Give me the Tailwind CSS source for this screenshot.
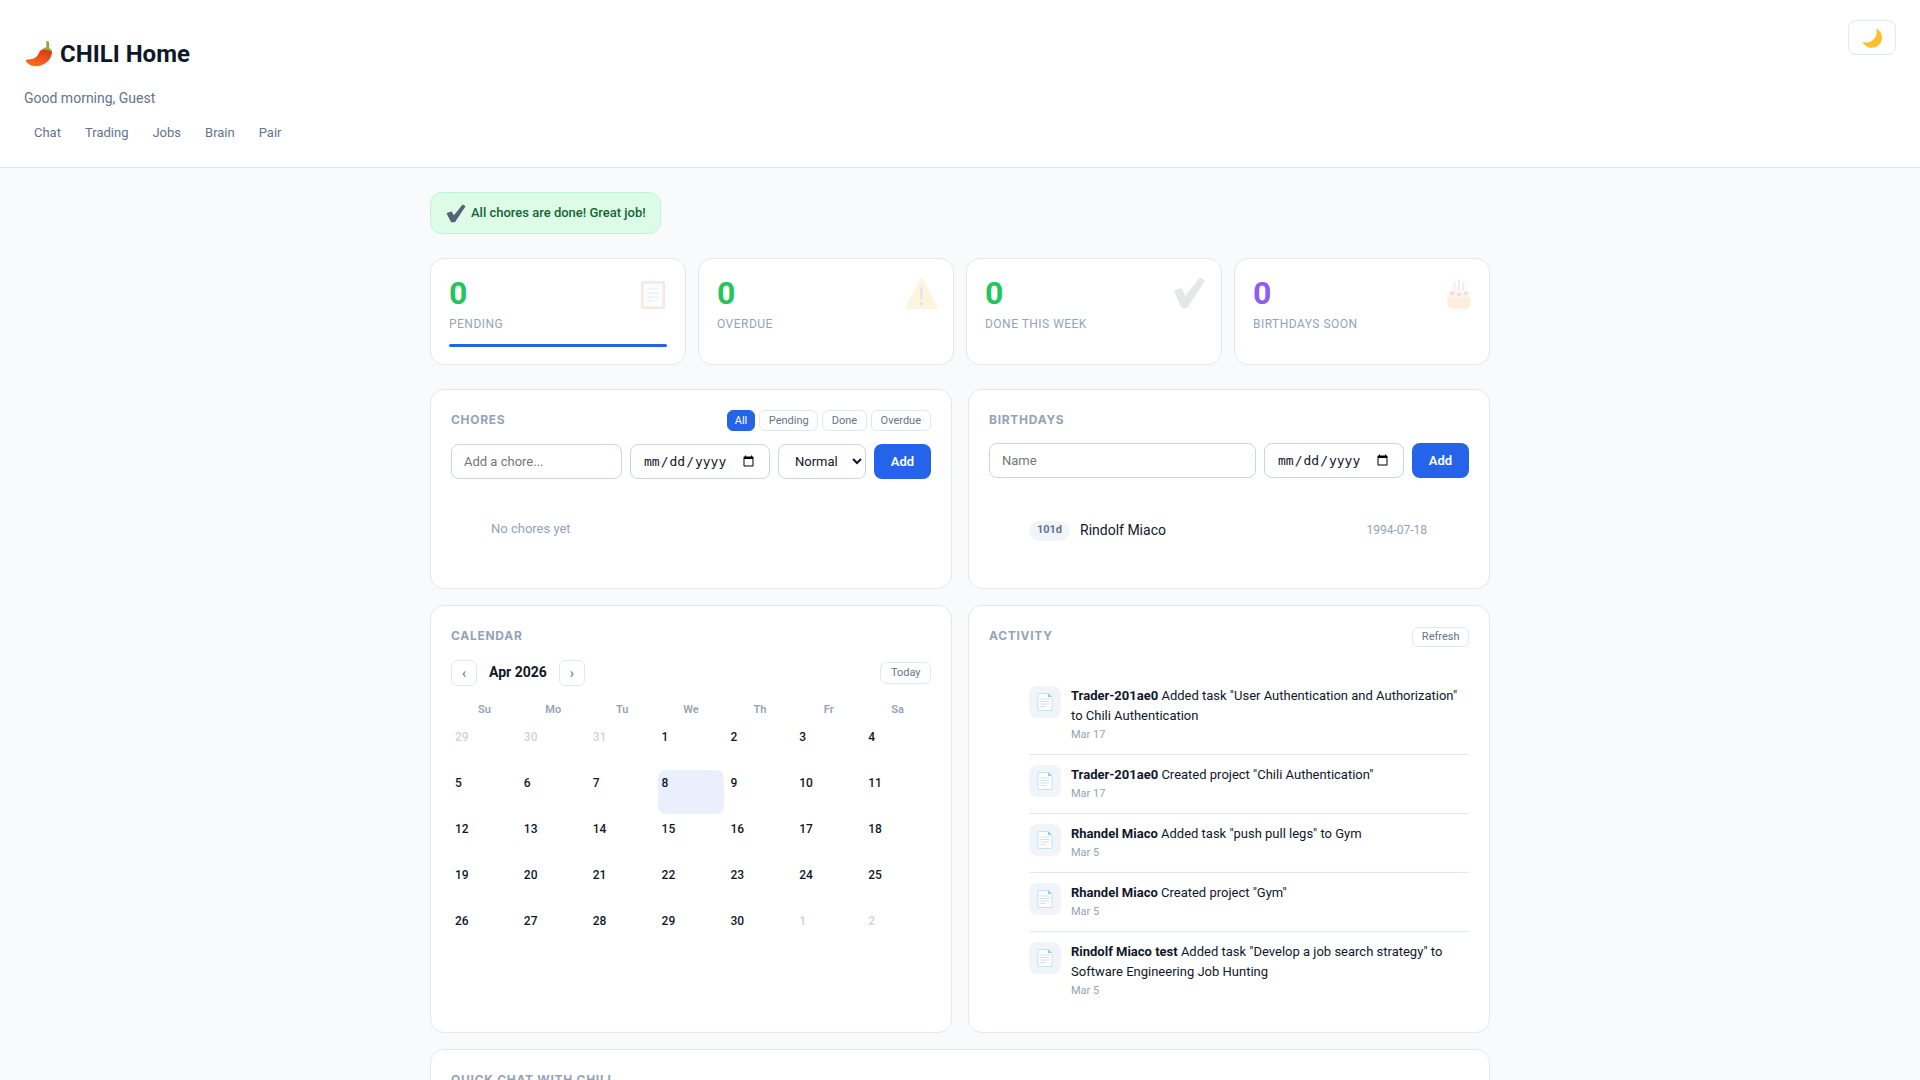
<!DOCTYPE html>
<html lang="en">
<head>
    <meta charset="UTF-8">
    <meta name="viewport" content="width=device-width, initial-scale=1.0">
    <title>CHILI Home</title>
    <script src="https://cdn.jsdelivr.net/npm/@tailwindcss/browser@4"></script>
</head>
<body class="h-screen overflow-hidden bg-[#f8fafc] font-[Roboto,sans-serif] text-[#0f172a]">
    <!-- Header -->
    <header class="flex h-[168px] items-start justify-between border-b border-[#e2e8f0] bg-white pt-[20px] pr-[24px] pl-[24px]">
        <div>
            <h1 class="mt-[18px] flex h-[32px] items-center gap-[7px] text-[24px] leading-[32px] font-bold">
                <svg class="ml-[1px] h-[28px] w-[28px]" viewBox="0 0 28 28">
                    <defs><linearGradient id="chili" x1="0.4" y1="1" x2="0.7" y2="0"><stop offset="0" stop-color="#ff6d1f"/><stop offset="1" stop-color="#dc3412"/></linearGradient></defs>
                    <path d="M21 8C21.500 5.500 21.500 3.500 21 1.500L23.500 1C24.500 3.500 24.500 6 24 8.500Z" fill="#7cb342"/>
                    <path d="M17 9.500C14.500 10.500 14 13 12.500 15.500C10.500 18.500 6 19.500 2.500 19.500C1 19.500 .5 20.500 1.500 22C4 25.500 9 27 14 26C21 24.500 27 18.500 27 12C27 10 24 8.800 21 8.800C19.500 8.800 18 9 17 9.500Z" fill="url(#chili)"/>
                    <path d="M17 10C18.500 7.500 21 6.800 23.500 7.500C25.500 8.200 26.800 10 26.800 12C24.500 10 20 9.500 17 10Z" fill="#8bb23f"/>
                </svg>
                <span>CHILI Home</span>
            </h1>
            <p class="mt-[17px] text-[14px] leading-[22px] text-[#64748b]">Good morning, Guest</p>
            <nav class="mt-[8px] flex gap-[4px] text-[13px] text-[#64748b]">
                <a class="px-[10px] py-[6px] leading-[20px]" href="#">Chat</a>
                <a class="px-[10px] py-[6px] leading-[20px]" href="#">Trading</a>
                <a class="px-[10px] py-[6px] leading-[20px]" href="#">Jobs</a>
                <a class="px-[10px] py-[6px] leading-[20px]" href="#">Brain</a>
                <a class="px-[10px] py-[6px] leading-[20px]" href="#">Pair</a>
            </nav>
        </div>
        <button class="flex h-[35px] w-[48px] items-center justify-center rounded-[8px] border border-[#e2e8f0] bg-white">
            <svg class="h-[22px] w-[22px]" viewBox="0 0 22 22"><path d="M15 1.500C19 3.500 21.500 7.500 21 11.500C20.500 16.500 16 20.800 11 20.800C7 20.800 3.500 18.500 1.500 15C5 16 9 15.500 12 13C15.500 10 16.500 5.500 15 1.500Z" fill="#fbc02d"/></svg>
        </button>
    </header>

    <main class="mx-auto w-[1060px] pt-[24px]">
        <!-- Banner -->
        <div class="flex h-[42px] w-[231px] items-center gap-[5px] rounded-[12px] border border-[#bbf7d0] bg-[#dcfce7] pl-[14px] text-[13px] font-medium text-[#166534]">
            <svg class="h-[21px] w-[21px] shrink-0" viewBox="0 0 32 32"><path d="M3.500 16L9.500 14L13.500 20.500L27 3.500L30 5L14.500 28.500L10 28.500Z" fill="#566275" stroke="#566275" stroke-width="2" stroke-linejoin="round"/></svg>
            <span>All chores are done! Great job!</span>
        </div>

        <!-- Stats -->
        <div class="mt-[24px] grid grid-cols-4 gap-[12px]">
            <div class="relative h-[107px] rounded-[14px] border border-[#e2e8f0] bg-white px-[18px] pt-[16px]">
                <div class="text-[32px] leading-[36px] font-bold text-[#22c55e]">0</div>
                <div class="mt-[3px] text-[12px] leading-[20px] tracking-[0.04em] text-[#94a3b8] uppercase">Pending</div>
                <div class="mt-[10px] h-[3px] rounded-full bg-[#2563eb]"></div>
                <svg class="absolute top-[19px] right-[16px] h-[32px] w-[32px] opacity-15" viewBox="0 0 32 32"><rect x="4" y="3" width="24" height="28" rx="2" fill="#c56a2c"/><rect x="6.500" y="5.500" width="19" height="23" fill="#eef2f4"/><path d="M10 11h12M10 15h12M10 19h12M10 23h8" stroke="#9aa4ad" stroke-width="1.500"/><path d="M10 6V3h4l2-2 2 2h4v3z" fill="#7f9fb3"/></svg>
            </div>
            <div class="relative h-[107px] rounded-[14px] border border-[#e2e8f0] bg-white px-[18px] pt-[16px]">
                <div class="text-[32px] leading-[36px] font-bold text-[#22c55e]">0</div>
                <div class="mt-[3px] text-[12px] leading-[20px] tracking-[0.04em] text-[#94a3b8] uppercase">Overdue</div>
                <svg class="absolute top-[18px] right-[15px] h-[33px] w-[33px] opacity-15" viewBox="0 0 32 32"><path d="M16 1.500c.8 0 1.300.5 1.700 1.200l13.800 26c.6 1.200-.1 2.300-1.400 2.300H1.900C.6 31-.1 29.900.5 28.700l13.800-26c.4-.7.900-1.200 1.700-1.200z" fill="#fbc02d"/><path d="M14.500 10h3l-.5 12h-2zM14.500 24.500h3v3h-3z" fill="#4b5563"/></svg>
            </div>
            <div class="relative h-[107px] rounded-[14px] border border-[#e2e8f0] bg-white px-[18px] pt-[16px]">
                <div class="text-[32px] leading-[36px] font-bold text-[#22c55e]">0</div>
                <div class="mt-[3px] text-[12px] leading-[20px] tracking-[0.04em] text-[#94a3b8] uppercase">Done this week</div>
                <svg class="absolute top-[18px] right-[16px] h-[32px] w-[32px] opacity-15" viewBox="0 0 32 32"><path d="M2 14L8 12L12.500 20L27 1.500L31 4L13.500 30.500L9 30.500Z" fill="#566275" stroke="#566275" stroke-width="1.500" stroke-linejoin="round"/></svg>
            </div>
            <div class="relative h-[107px] rounded-[14px] border border-[#e2e8f0] bg-white px-[18px] pt-[16px]">
                <div class="text-[32px] leading-[36px] font-bold text-[#8b5cf6]">0</div>
                <div class="mt-[3px] text-[12px] leading-[20px] tracking-[0.04em] text-[#94a3b8] uppercase">Birthdays soon</div>
                <svg class="absolute top-[20px] right-[16px] h-[31px] w-[28px] opacity-20" viewBox="0 0 28 32"><rect x="2" y="11" width="24" height="20" rx="6" fill="#f9b568"/><path d="M2 17c0-4 4-7 12-7s12 3 12 7c0 2-2 3-3 1-1 2-4 2-5 0-1 2-3 2-4 0-1 2-4 2-5 0-1 2-3 2-4 0-1 2-3 1-3-1z" fill="#f8d7c4"/><circle cx="7" cy="15" r="2" fill="#e53935"/><circle cx="14" cy="16" r="2" fill="#e53935"/><circle cx="21" cy="15" r="2" fill="#e53935"/><path d="M9.500 3v8M18.500 3v8" stroke="#f9a825" stroke-width="2"/><path d="M14 1v10" stroke="#64b5f6" stroke-width="2"/></svg>
            </div>
        </div>

        <!-- Chores / Birthdays -->
        <div class="mt-[24px] grid grid-cols-2 gap-[16px]">
            <section class="h-[200px] rounded-[14px] border border-[#e2e8f0] bg-white p-[20px]">
                <div class="flex h-[21px] items-center justify-between">
                    <h2 class="-mt-[1px] text-[12px] font-bold tracking-[0.06em] text-[#94a3b8] uppercase font-[Inter,sans-serif]">Chores</h2>
                    <div class="flex gap-[4px] text-[11px]">
                        <button class="h-[21px] rounded-[6px] border border-[#2563eb] bg-[#2563eb] px-[7px] pt-[1px] text-white">All</button>
                        <button class="h-[21px] rounded-[6px] border border-[#e2e8f0] bg-white px-[8.500px] pt-[1px] text-[#64748b]">Pending</button>
                        <button class="h-[21px] rounded-[6px] border border-[#e2e8f0] bg-white px-[8.500px] pt-[1px] text-[#64748b]">Done</button>
                        <button class="h-[21px] rounded-[6px] border border-[#e2e8f0] bg-white px-[9px] pt-[1px] text-[#64748b]">Overdue</button>
                    </div>
                </div>
                <div class="mt-[13px] flex gap-[8px]">
                    <input class="h-[35px] min-w-0 flex-1 rounded-[8px] border border-[#cbd5e1] px-[12px] text-[13px] placeholder:text-[#757575]" placeholder="Add a chore...">
                    <input type="date" class="h-[35px] w-[140px] rounded-[8px] border border-[#cbd5e1] px-[12px] text-[13px] font-['DejaVu_Sans_Mono',monospace]">
                    <select class="h-[35px] w-[88px] appearance-auto rounded-[8px] border border-[#cbd5e1] bg-white px-[12px] text-[13px]"><option>Normal</option></select>
                    <button class="h-[35px] w-[57px] rounded-[8px] bg-[#2563eb] text-[13px] font-semibold text-white">Add</button>
                </div>
                <ul class="mt-[16px] pl-[40px]">
                    <li class="pt-[24px] text-[13px] leading-[20px] text-[#94a3b8]">No chores yet</li>
                </ul>
            </section>
            <section class="h-[200px] rounded-[14px] border border-[#e2e8f0] bg-white p-[20px]">
                <h2 class="h-[20px] text-[12px] leading-[20px] font-bold tracking-[0.06em] text-[#94a3b8] uppercase font-[Inter,sans-serif]">Birthdays</h2>
                <div class="mt-[13px] flex gap-[8px]">
                    <input class="h-[35px] min-w-0 flex-1 rounded-[8px] border border-[#cbd5e1] px-[12px] text-[13px] placeholder:text-[#757575]" placeholder="Name">
                    <input type="date" class="h-[35px] w-[140px] rounded-[8px] border border-[#cbd5e1] px-[12px] text-[13px] font-['DejaVu_Sans_Mono',monospace]">
                    <button class="h-[35px] w-[57px] rounded-[8px] bg-[#2563eb] text-[13px] font-semibold text-white">Add</button>
                </div>
                <ul class="mt-[16px] pl-[40px]">
                    <li class="flex items-center gap-[10px] pt-[26px] pr-[42px]">
                        <span class="flex h-[20px] w-[41px] items-center justify-center rounded-full bg-[#f1f5f9] text-[11px] font-bold text-[#64748b]">101d</span>
                        <span class="flex-1 text-[14px]">Rindolf Miaco</span>
                        <span class="-mt-[1px] text-[12px] text-[#94a3b8]">1994-07-18</span>
                    </li>
                </ul>
            </section>
        </div>

        <!-- Calendar / Activity -->
        <div class="mt-[16px] grid grid-cols-2 gap-[16px]">
            <section class="h-[428px] rounded-[14px] border border-[#e2e8f0] bg-white p-[20px]">
                <h2 class="h-[20px] text-[12px] leading-[20px] font-bold tracking-[0.06em] text-[#94a3b8] uppercase font-[Inter,sans-serif]">Calendar</h2>
                <div class="mt-[14px] flex h-[26px] items-center gap-[12px]">
                    <button class="flex h-[26px] w-[26px] items-center justify-center rounded-[6px] border border-[#e2e8f0] text-[14px] text-[#64748b]">‹</button>
                    <span class="-mt-[2px] text-[14px] font-bold">Apr 2026</span>
                    <button class="flex h-[26px] w-[26px] items-center justify-center rounded-[6px] border border-[#e2e8f0] text-[14px] text-[#64748b]">›</button>
                    <button class="ml-auto h-[22px] rounded-[6px] border border-[#e2e8f0] px-[9.500px] text-[11px] text-[#64748b]">Today</button>
                </div>
                <div class="mt-[15px] grid grid-cols-7 gap-x-[2px] text-center text-[11px] leading-[18px] font-semibold text-[#94a3b8]">
                    <div>Su</div><div>Mo</div><div>Tu</div><div>We</div><div>Th</div><div>Fr</div><div>Sa</div>
                </div>
                <div class="mt-[5px] grid grid-cols-7 gap-[2px] text-[12px] leading-[18px] font-medium">
                    <div class="h-[44px] p-[4px_4px] text-[#cbd5e1]">29</div><div class="h-[44px] p-[4px_4px] text-[#cbd5e1]">30</div><div class="h-[44px] p-[4px_4px] text-[#cbd5e1]">31</div><div class="h-[44px] p-[4px_4px]">1</div><div class="h-[44px] p-[4px_4px]">2</div><div class="h-[44px] p-[4px_4px]">3</div><div class="h-[44px] p-[4px_4px]">4</div>
                    <div class="h-[44px] p-[4px_4px]">5</div><div class="h-[44px] p-[4px_4px]">6</div><div class="h-[44px] p-[4px_4px]">7</div><div class="h-[44px] rounded-[8px] bg-[#e9effd] p-[4px_4px]">8</div><div class="h-[44px] p-[4px_4px]">9</div><div class="h-[44px] p-[4px_4px]">10</div><div class="h-[44px] p-[4px_4px]">11</div>
                    <div class="h-[44px] p-[4px_4px]">12</div><div class="h-[44px] p-[4px_4px]">13</div><div class="h-[44px] p-[4px_4px]">14</div><div class="h-[44px] p-[4px_4px]">15</div><div class="h-[44px] p-[4px_4px]">16</div><div class="h-[44px] p-[4px_4px]">17</div><div class="h-[44px] p-[4px_4px]">18</div>
                    <div class="h-[44px] p-[4px_4px]">19</div><div class="h-[44px] p-[4px_4px]">20</div><div class="h-[44px] p-[4px_4px]">21</div><div class="h-[44px] p-[4px_4px]">22</div><div class="h-[44px] p-[4px_4px]">23</div><div class="h-[44px] p-[4px_4px]">24</div><div class="h-[44px] p-[4px_4px]">25</div>
                    <div class="h-[44px] p-[4px_4px]">26</div><div class="h-[44px] p-[4px_4px]">27</div><div class="h-[44px] p-[4px_4px]">28</div><div class="h-[44px] p-[4px_4px]">29</div><div class="h-[44px] p-[4px_4px]">30</div><div class="h-[44px] p-[4px_4px] text-[#cbd5e1]">1</div><div class="h-[44px] p-[4px_4px] text-[#cbd5e1]">2</div>
                </div>
            </section>
            <section class="h-[428px] rounded-[14px] border border-[#e2e8f0] bg-white p-[20px]">
                <div class="flex h-[21px] items-center justify-between">
                    <h2 class="-mt-[1px] text-[12px] font-bold tracking-[0.06em] text-[#94a3b8] uppercase font-[Inter,sans-serif]">Activity</h2>
                    <button class="h-[20px] rounded-[6px] border border-[#e2e8f0] px-[8.500px] pt-[1px] text-[11px] text-[#64748b]">Refresh</button>
                </div>
                <ul class="mt-[29px] pl-[40px] text-[13px] leading-[20px]">
                    <li class="flex gap-[10px] border-b border-[#e2e8f0] py-[10px]">
                        <span class="flex h-[32px] w-[32px] shrink-0 items-center justify-center rounded-[8px] bg-[#f1f5f9]"><svg class="h-[18px] w-[16px]" viewBox="0 0 16 18"><path d="M1 .5h10l4 4v13H1z" fill="#fff" stroke="#bae6fd"/><path d="M11 0l4 4h-4z" fill="#7dd3fc"/><path d="M3.500 6h9M3.500 8.500h9M3.500 11h9M3.500 13.500h5" stroke="#d5dee8"/></svg></span>
                        <div><p><b class="font-bold">Trader-201ae0</b> Added task "User Authentication and Authorization" to Chili Authentication</p><p class="text-[11px] leading-[18px] text-[#94a3b8]">Mar 17</p></div>
                    </li>
                    <li class="flex gap-[10px] border-b border-[#e2e8f0] py-[10px]">
                        <span class="flex h-[32px] w-[32px] shrink-0 items-center justify-center rounded-[8px] bg-[#f1f5f9]"><svg class="h-[18px] w-[16px]" viewBox="0 0 16 18"><path d="M1 .5h10l4 4v13H1z" fill="#fff" stroke="#bae6fd"/><path d="M11 0l4 4h-4z" fill="#7dd3fc"/><path d="M3.500 6h9M3.500 8.500h9M3.500 11h9M3.500 13.500h5" stroke="#d5dee8"/></svg></span>
                        <div><p><b class="font-bold">Trader-201ae0</b> Created project "Chili Authentication"</p><p class="text-[11px] leading-[18px] text-[#94a3b8]">Mar 17</p></div>
                    </li>
                    <li class="flex gap-[10px] border-b border-[#e2e8f0] py-[10px]">
                        <span class="flex h-[32px] w-[32px] shrink-0 items-center justify-center rounded-[8px] bg-[#f1f5f9]"><svg class="h-[18px] w-[16px]" viewBox="0 0 16 18"><path d="M1 .5h10l4 4v13H1z" fill="#fff" stroke="#bae6fd"/><path d="M11 0l4 4h-4z" fill="#7dd3fc"/><path d="M3.500 6h9M3.500 8.500h9M3.500 11h9M3.500 13.500h5" stroke="#d5dee8"/></svg></span>
                        <div><p><b class="font-bold">Rhandel Miaco</b> Added task "push pull legs" to Gym</p><p class="text-[11px] leading-[18px] text-[#94a3b8]">Mar 5</p></div>
                    </li>
                    <li class="flex gap-[10px] border-b border-[#e2e8f0] py-[10px]">
                        <span class="flex h-[32px] w-[32px] shrink-0 items-center justify-center rounded-[8px] bg-[#f1f5f9]"><svg class="h-[18px] w-[16px]" viewBox="0 0 16 18"><path d="M1 .5h10l4 4v13H1z" fill="#fff" stroke="#bae6fd"/><path d="M11 0l4 4h-4z" fill="#7dd3fc"/><path d="M3.500 6h9M3.500 8.500h9M3.500 11h9M3.500 13.500h5" stroke="#d5dee8"/></svg></span>
                        <div><p><b class="font-bold">Rhandel Miaco</b> Created project "Gym"</p><p class="text-[11px] leading-[18px] text-[#94a3b8]">Mar 5</p></div>
                    </li>
                    <li class="flex gap-[10px] py-[10px]">
                        <span class="flex h-[32px] w-[32px] shrink-0 items-center justify-center rounded-[8px] bg-[#f1f5f9]"><svg class="h-[18px] w-[16px]" viewBox="0 0 16 18"><path d="M1 .5h10l4 4v13H1z" fill="#fff" stroke="#bae6fd"/><path d="M11 0l4 4h-4z" fill="#7dd3fc"/><path d="M3.500 6h9M3.500 8.500h9M3.500 11h9M3.500 13.500h5" stroke="#d5dee8"/></svg></span>
                        <div><p><b class="font-bold">Rindolf Miaco test</b> Added task "Develop a job search strategy" to Software Engineering Job Hunting</p><p class="text-[11px] leading-[18px] text-[#94a3b8]">Mar 5</p></div>
                    </li>
                </ul>
            </section>
        </div>

        <!-- Quick chat -->
        <section class="mt-[16px] h-[200px] rounded-[14px] border border-[#e2e8f0] bg-white p-[20px]">
            <h2 class="h-[20px] text-[12px] leading-[20px] font-bold tracking-[0.06em] text-[#94a3b8] uppercase font-[Inter,sans-serif]">Quick chat with Chili</h2>
        </section>
    </main>
</body>
</html>
